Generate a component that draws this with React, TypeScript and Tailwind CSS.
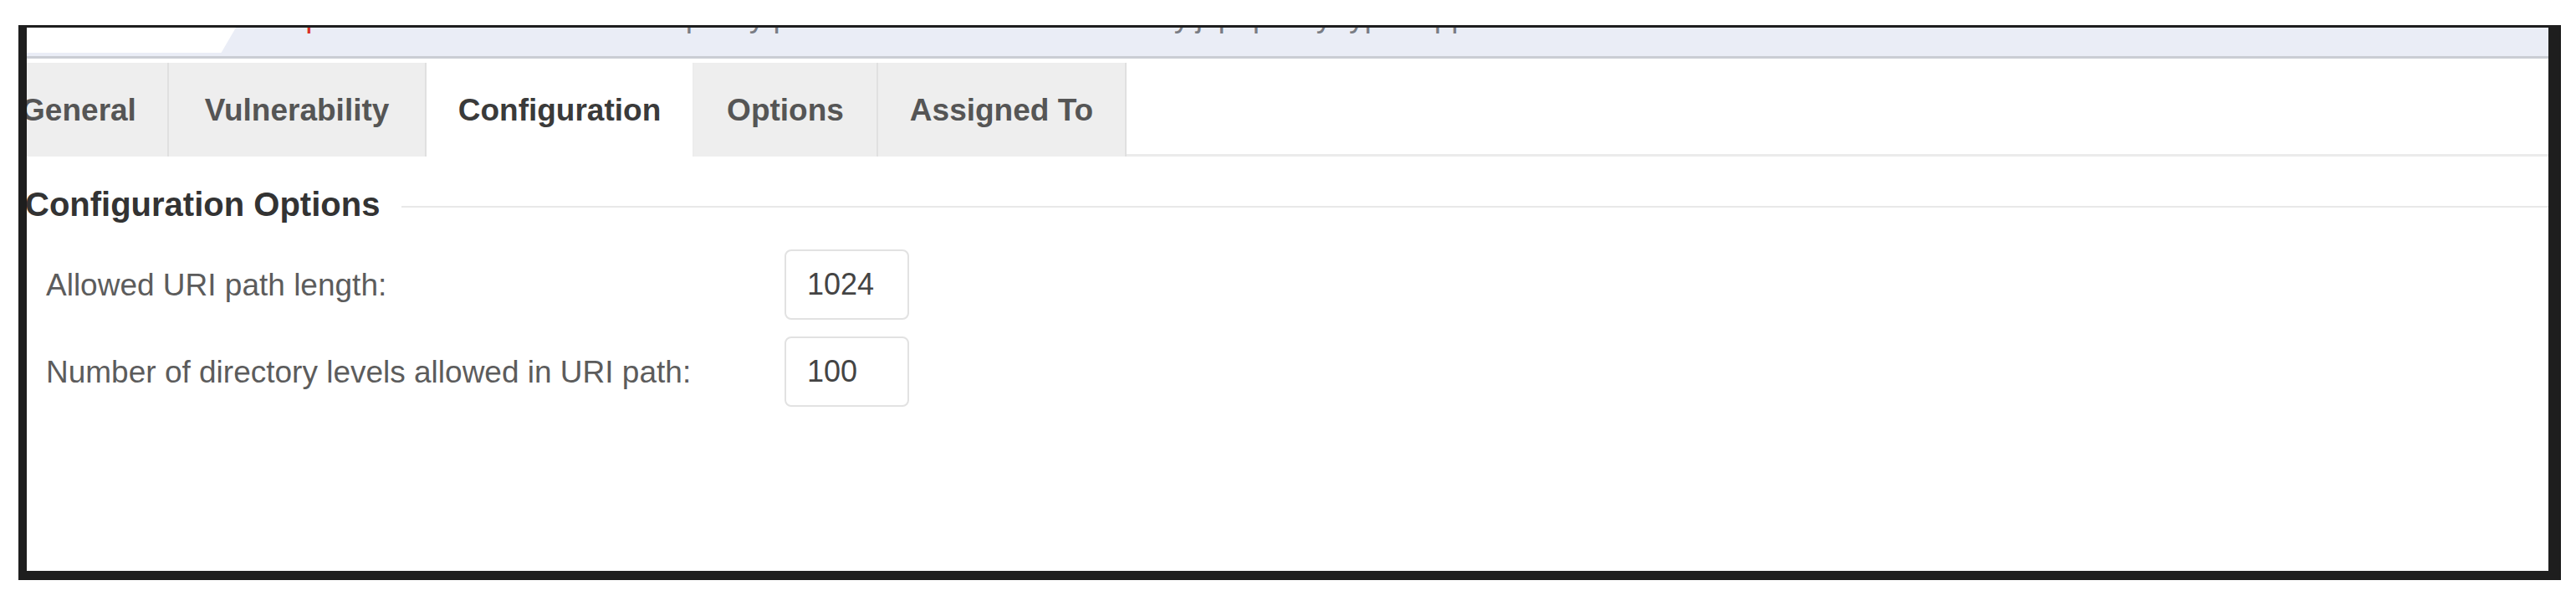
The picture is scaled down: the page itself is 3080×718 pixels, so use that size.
import React from 'react';

const tabs = [
  { label: 'General', width: 'w-[214px]', active: false },
  { label: 'Vulnerability', width: 'w-[308px]', active: false },
  { label: 'Configuration', width: 'w-[320px]', active: true },
  { label: 'Options', width: 'w-[220px]', active: false },
  { label: 'Assigned To', width: 'w-[297px]', active: false },
];

const fields = [
  { label: 'Allowed URI path length:', value: '1024' },
  { label: 'Number of directory levels allowed in URI path:', value: '100' },
];

export default function App() {
  return (
    <div className="w-[3080px] h-[718px] bg-white pt-[30px] pl-[22px] font-['Liberation_Sans',Arial,sans-serif]">
      <div className="w-[3040px] h-[663px] border-t-[3px] border-l-[10px] border-r-[15px] border-b-[11px] border-[#1e1e1e] overflow-hidden bg-white">
        {/* cut-off browser bar */}
        <div className="relative h-[37px] bg-[#eaedf6] border-b-[3px] border-[#cacdd4] overflow-hidden">
          <div className="absolute left-0 top-0 h-[30px] w-[250px] bg-white [clip-path:polygon(0_0,100%_0,93%_100%,0_100%)]" />
          <div className="relative ml-[292px] mt-[-32px] text-[37px] leading-none whitespace-nowrap text-[#7a7d84]">
            <span className="text-[#d93025]">https</span>
            <span>://10.20.30.40/webadmin/policy/protection/editProtectionPolicy.jsp?policyType=application&amp;id=42</span>
          </div>
        </div>

        {/* tabs */}
        <div className="flex h-[112px] mt-[5px] ml-[-44px]">
          {tabs.map((t) => (
            <div
              key={t.label}
              className={`${t.width} shrink-0 flex items-center justify-center border-r-2 text-[37px] font-bold leading-none ${
                t.active ? 'bg-white border-[#ececec] text-[#3a3a3a]' : 'bg-[#eeeeee] border-[#e0e0e0] text-[#555555]'
              }`}
            >
              {t.label}
            </div>
          ))}
          <div className="flex-1 border-b-[3px] border-[#ebebeb]" />
        </div>

        {/* fieldset legend */}
        <div className="flex items-center h-[40px] mt-[37px]">
          <span className="ml-[-2px] text-[40px] font-bold leading-[40px] text-[#333333] whitespace-nowrap">
            Configuration Options
          </span>
          <div className="flex-1 h-[2px] ml-[26px] mt-[6px] bg-[#e8e8e8]" />
        </div>

        <div className="flex flex-col gap-[20px] mt-[34px] pl-[23px]">
          {fields.map((f) => (
            <div key={f.label} className="flex items-center h-[84px]">
              <span className="w-[883px] shrink-0 text-[37px] leading-none text-[#5c5c5c] whitespace-nowrap">
                {f.label}
              </span>
              <div className="w-[149px] h-[84px] flex items-center pl-[25px] border-2 border-[#e2e2e2] rounded-[8px] text-[36px] leading-none text-[#444444]">
                {f.value}
              </div>
            </div>
          ))}
        </div>
      </div>
    </div>
  );
}
